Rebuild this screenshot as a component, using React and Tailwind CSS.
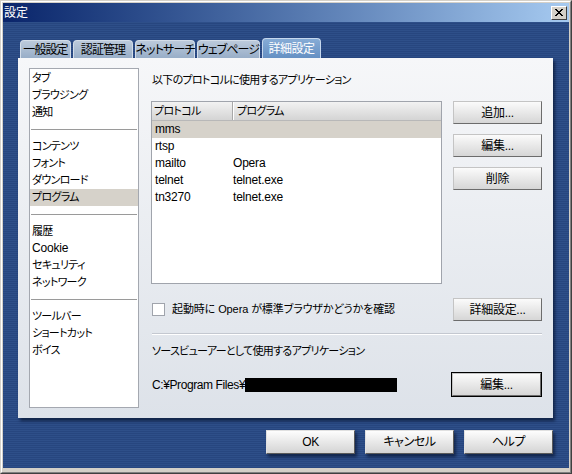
const font = "font-['Liberation_Sans','Noto_Sans_CJK_JP',sans-serif] [font-feature-settings:'palt']";
const jp = 'text-[11px] tracking-[-0.7px] whitespace-nowrap';

const tabs = [
  { label: '一般設定', w: 'w-[51px]' },
  { label: '認証管理', w: 'w-[60px]' },
  { label: 'ネットサーチ', w: 'w-[60px]' },
  { label: 'ウェブページ', w: 'w-[63px]' },
];

const groups = [
  ['タブ', 'ブラウジング', '通知'],
  ['コンテンツ', 'フォント', 'ダウンロード', 'プログラム'],
  ['履歴', 'Cookie', 'セキュリティ', 'ネットワーク'],
  ['ツールバー', 'ショートカット', 'ボイス'],
];

const protocols = [
  { name: 'mms', prog: '' },
  { name: 'rtsp', prog: '' },
  { name: 'mailto', prog: 'Opera' },
  { name: 'telnet', prog: 'telnet.exe' },
  { name: 'tn3270', prog: 'telnet.exe' },
];

function Btn({ children, className = '' }) {
  return (
    <div
      className={`flex items-center justify-center w-[89px] h-[23px] border border-t-[#c4c4c4] border-l-[#c4c4c4] border-b-[#6c6c6c] border-r-[#6c6c6c] bg-linear-to-b from-[#fbfbfb] to-[#d6d6d6] leading-none text-black text-[12px] tracking-[-0.3px] whitespace-nowrap ${className}`}
    >
      {children}
    </div>
  );
}

function BottomBtn({ children }) {
  return (
    <div className="flex items-center justify-center w-[89px] h-[24px] border border-t-[#e0e0e0] border-l-[#e0e0e0] border-b-[#5a5a5a] border-r-[#5a5a5a] bg-linear-to-b from-[#fdfdfd] to-[#d4d4d4] leading-none text-black text-[12px] tracking-[-0.4px] whitespace-nowrap shadow-[2px_3px_3px_rgba(5,15,40,0.6)]">
      {children}
    </div>
  );
}

function CloseIcon() {
  return (
    <svg width="10" height="9" viewBox="0 0 10 9">
      <path d="M1 1 L8 8 M2 1 L9 8 M8 1 L1 8 M9 1 L2 8" stroke="#000" strokeWidth="1" />
    </svg>
  );
}

export default function App() {
  return (
    <div className={`w-[572px] h-[474px] bg-[#d4d0c8] border border-t-[#d4d0c8] border-l-[#d4d0c8] border-b-[#404040] border-r-[#404040] ${font}`}>
      <div className="h-full border border-t-white border-l-white border-b-[#808080] border-r-[#808080] p-px flex flex-col">
        {/* title bar */}
        <div className="h-[19px] shrink-0 flex items-center justify-between pl-[1px] pr-[2px] bg-linear-to-r from-[#0a246a] to-[#a6caf0]">
          <span className="text-white text-[12px] leading-none">設定</span>
          <div className="w-[16px] h-[14px] flex items-center justify-center bg-[#d4d0c8] border border-t-white border-l-white border-b-[#404040] border-r-[#404040]">
            <CloseIcon />
          </div>
        </div>

        {/* body */}
        <div className="h-[446px] shrink-0 pt-[16px] pl-[15px] bg-[repeating-linear-gradient(to_bottom,#2e4f89_0px,#2e4f89_1px,#27467f_1px,#27467f_2px)]">
          {/* tabs */}
          <div className="flex items-end gap-[2px] h-[20px] pl-[2px]">
            {tabs.map((t) => (
              <div
                key={t.label}
                className={`${t.w} h-[18px] flex items-center justify-center rounded-t-[4px] border border-b-0 border-[#d3dde9] bg-linear-to-b from-[#bccadb] to-[#98aec8] leading-none text-black text-[12px] tracking-[-0.9px] whitespace-nowrap`}
              >
                {t.label}
              </div>
            ))}
            <div className="w-[59px] h-[20px] flex items-center justify-center rounded-t-[4px] border border-b-0 border-[#c6d8ee] bg-linear-to-b from-[#86acd6] to-[#6590c3] text-[12px] tracking-[-0.5px] leading-none text-white">
              詳細設定
            </div>
          </div>

          {/* panel */}
          <div className="w-[535px] h-[360px] flex pt-[10px] pl-[11px] pr-[11px] pb-[10px] gap-[12px] bg-linear-to-b from-[#f6f7f9] to-[#dde2e9] shadow-[2px_3px_3px_rgba(5,15,40,0.65)]">
            {/* left list */}
            <div className="w-[110px] h-[340px] shrink-0 bg-white border border-[#a4a8b0] pt-px leading-[17px] text-black">
              {groups.map((g, gi) => (
                <div key={gi}>
                  {gi > 0 && <div className="h-px mx-px mt-[8px] mb-[8px] bg-[#9a9a9a]" />}
                  {g.map((item) => (
                    <div
                      key={item}
                      className={`h-[17px] pl-[2px] ${item === 'Cookie' ? 'text-[12px] tracking-[-0.2px]' : jp} ${item === 'プログラム' ? 'bg-[#d6d2ca]' : ''}`}
                    >
                      {item}
                    </div>
                  ))}
                </div>
              ))}
            </div>

            {/* right column */}
            <div className="flex-1 flex flex-col text-[12px] text-black">
              <div className={`mt-[4px] h-[17px] leading-[17px] pl-px ${jp}`}>以下のプロトコルに使用するアプリケーション</div>

              <div className="mt-[12px] flex gap-[11px]">
                <div className="w-[291px] h-[183px] bg-white border border-[#a0a4ac]">
                  <div className={`flex h-[19px] bg-linear-to-b from-[#f2f2f2] to-[#d4d4d4] border-b border-[#b8b8b8] leading-[18px] ${jp}`}>
                    <div className="w-[81px] pl-[2px] border-r border-r-[#a8a8a8] shadow-[1px_0_0_#fff]">プロトコル</div>
                    <div className="pl-[4px]">プログラム</div>
                  </div>
                  {protocols.map((p, i) => (
                    <div
                      key={p.name}
                      className={`flex h-[17px] leading-[17px] tracking-[-0.2px] ${i === 0 ? 'bg-[#d6d2ca]' : ''}`}
                    >
                      <div className="w-[81px] pl-[3px]">{p.name}</div>
                      <div>{p.prog}</div>
                    </div>
                  ))}
                </div>
                <div className="flex flex-col gap-[10px]">
                  <Btn>追加...</Btn>
                  <Btn>編集...</Btn>
                  <Btn>削除</Btn>
                </div>
              </div>

              <div className="mt-[14px] flex items-center h-[23px]">
                <div className="ml-px w-[13px] h-[13px] bg-white border border-[#a0a4ac]" />
                <span className="ml-[7px] flex-1 text-[11px] tracking-[-0.1px]">起動時に Opera が標準ブラウザかどうかを確認</span>
                <Btn>詳細設定...</Btn>
              </div>

              <div className="mt-[12px] ml-px h-px bg-[#c4c8d0] shadow-[0_1px_0_#ffffff]" />

              <div className={`mt-[9px] h-[17px] leading-[17px] pl-px ${jp}`}>ソースビューアーとして使用するアプリケーション</div>

              <div className="mt-[12px] flex items-center h-[25px]">
                <span className="pl-px tracking-[-0.4px]">C:¥Program Files¥</span>
                <div className="w-[152px] h-[14px] bg-black" />
                <div className="flex-1" />
                <div className="border border-black">
                  <Btn className="h-[23px] w-[87px]">編集...</Btn>
                </div>
              </div>
            </div>
          </div>

          {/* bottom buttons */}
          <div className="w-[535px] mt-[12px] flex justify-end gap-[10px]">
            <BottomBtn>OK</BottomBtn>
            <BottomBtn>キャンセル</BottomBtn>
            <BottomBtn>ヘルプ</BottomBtn>
          </div>
        </div>
      </div>
    </div>
  );
}
